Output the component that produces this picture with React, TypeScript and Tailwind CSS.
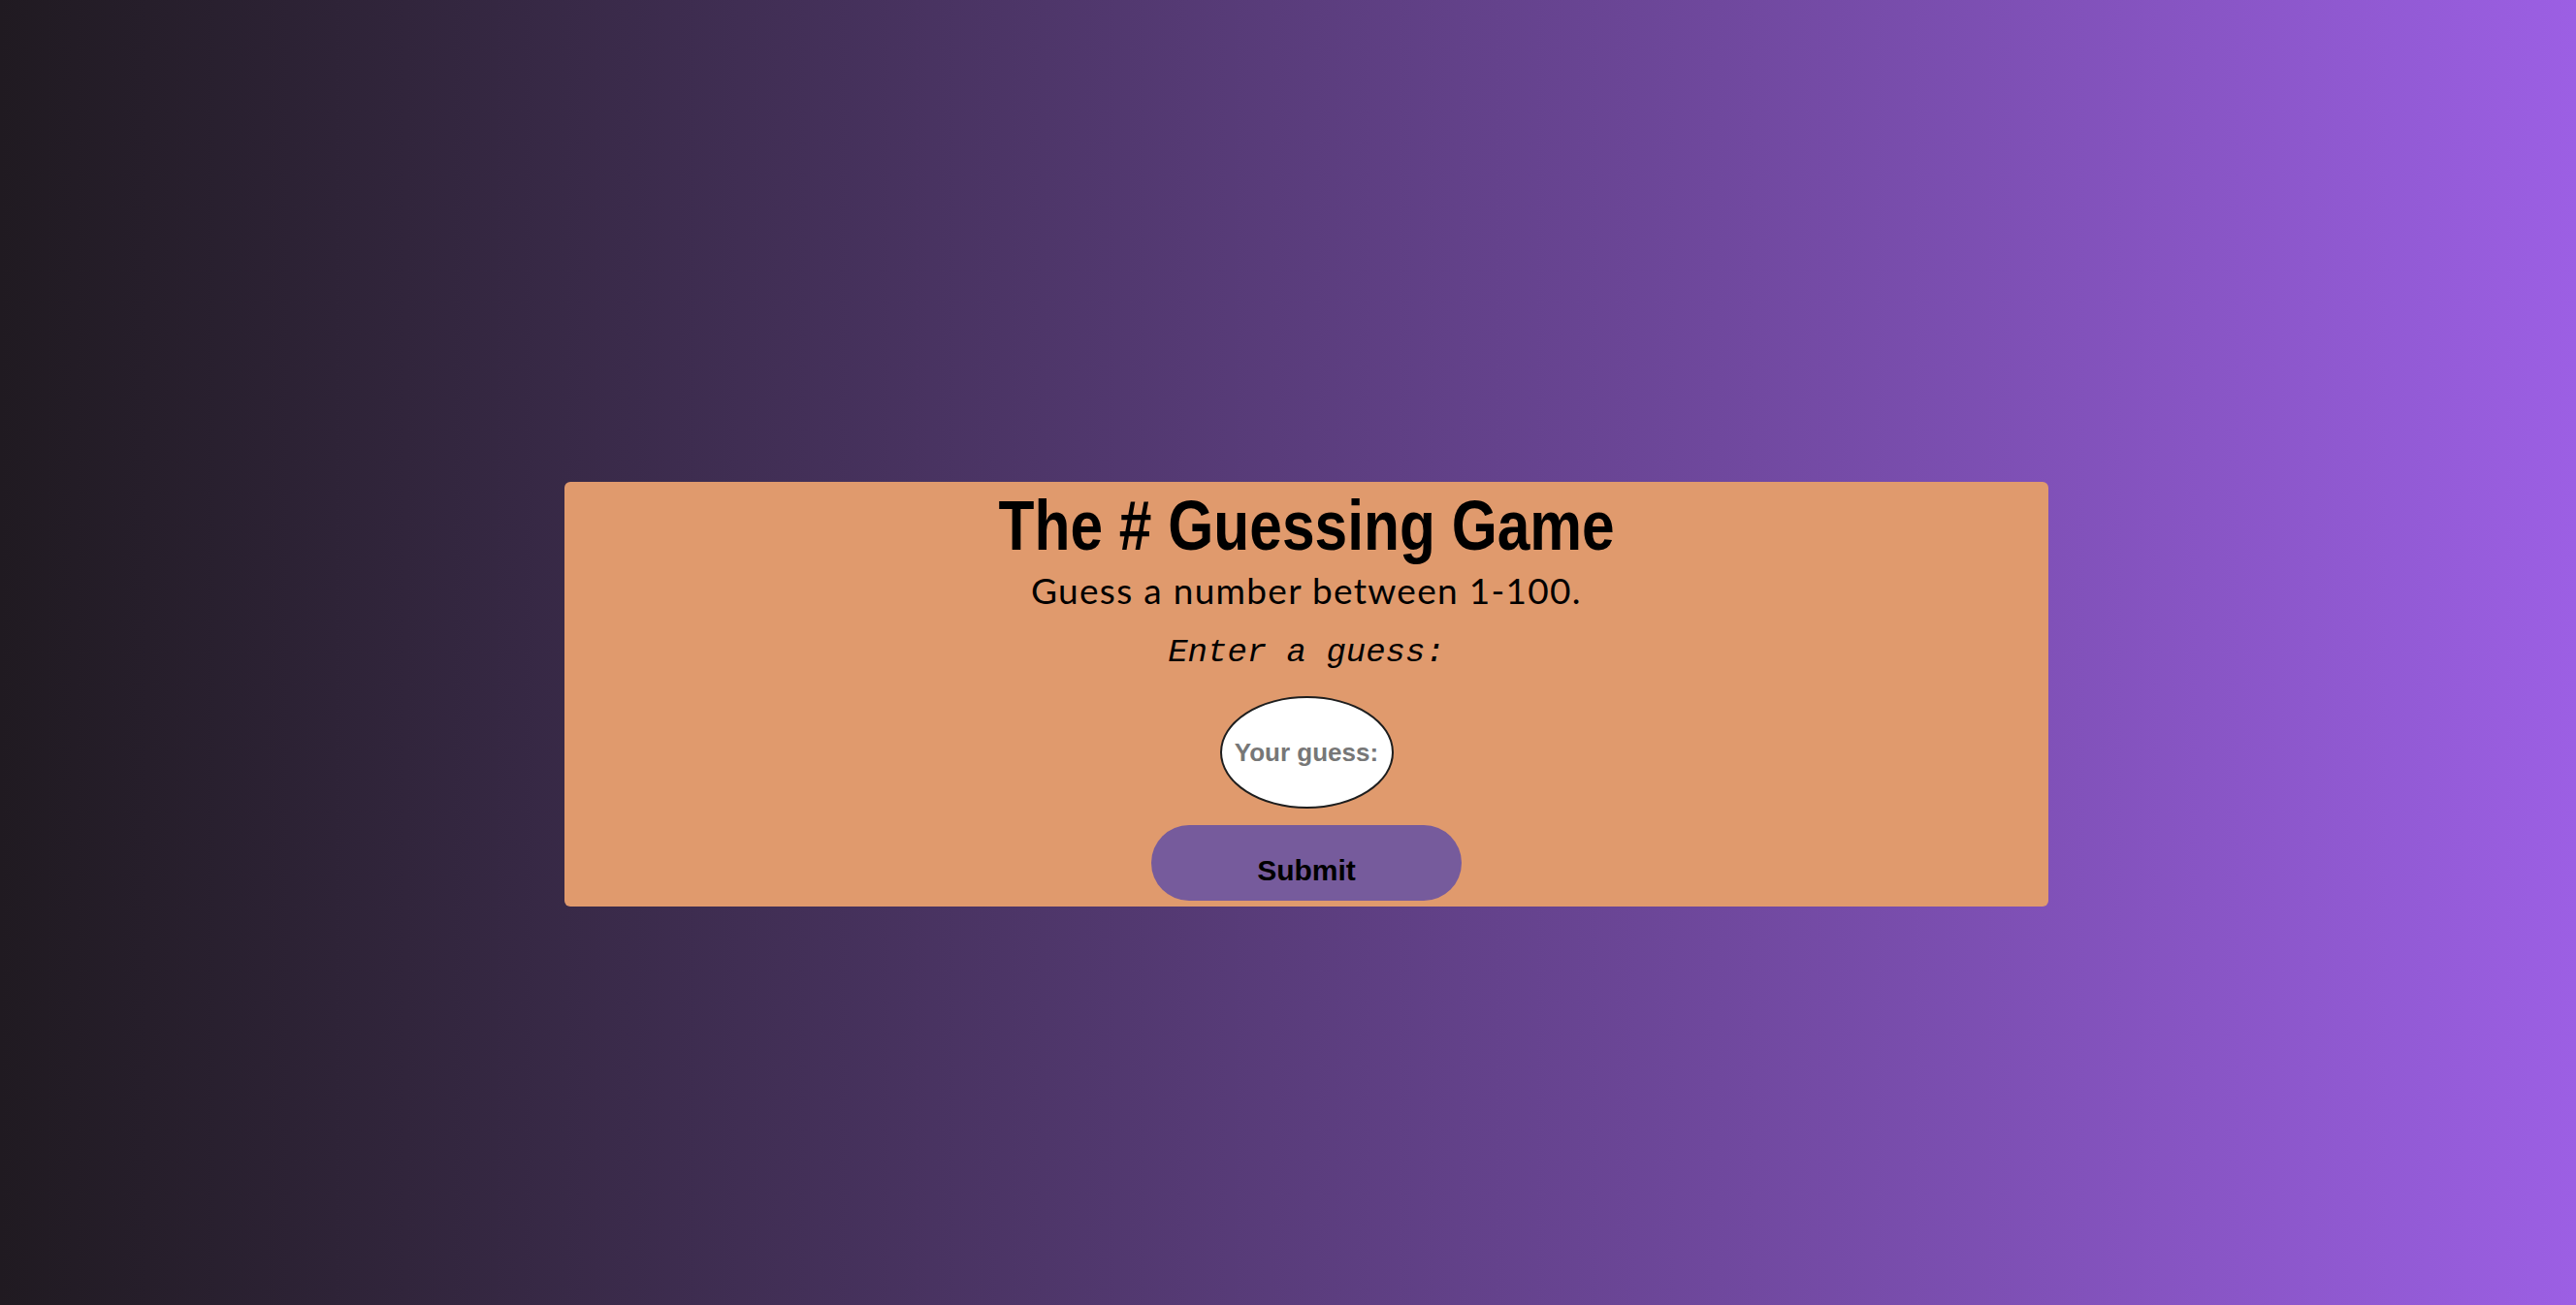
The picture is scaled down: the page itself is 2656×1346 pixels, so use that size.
import React from "react";

export default function App() {
  return (
    <div className="w-full h-[1346px] overflow-hidden bg-linear-to-r from-[#201a21] to-[#9c5fe4]">
      <div className="ml-[582px] pt-[497px] w-[1530px]">
        <div className="flex flex-col items-center rounded-md bg-[#e09a6d] pt-[5px] pb-[6px]">
          <h1 className="scale-x-[0.84] text-[72px] leading-[80px] font-bold text-black font-['Liberation_Sans',Arial,sans-serif] whitespace-nowrap">
            The # Guessing Game
          </h1>
          <h2 className="mt-[6px] text-[37px] leading-[42px] tracking-[1.3px] text-black font-[Lato,'Open_Sans',sans-serif]">
            Guess a number between 1-100.
          </h2>
          <p className="mt-[23px] text-[34px] leading-[40px] italic text-black font-['Liberation_Mono','Courier_New',monospace]">
            Enter a guess:
          </p>
          <input
            type="text"
            placeholder="Your guess:"
            className="mt-[25px] w-[179px] h-[116px] rounded-[50%] border-2 border-[#1e1e1e] bg-white px-0 text-center text-[26px] font-bold text-black placeholder:text-[#777777] outline-none font-['Liberation_Sans',Arial,sans-serif]"
          />
          <button className="mt-[17px] w-[320px] h-[78px] rounded-full bg-[#765b9c] pt-[14px] text-[30px] font-bold text-black font-['Liberation_Sans',Arial,sans-serif]">
            Submit
          </button>
        </div>
      </div>
    </div>
  );
}
